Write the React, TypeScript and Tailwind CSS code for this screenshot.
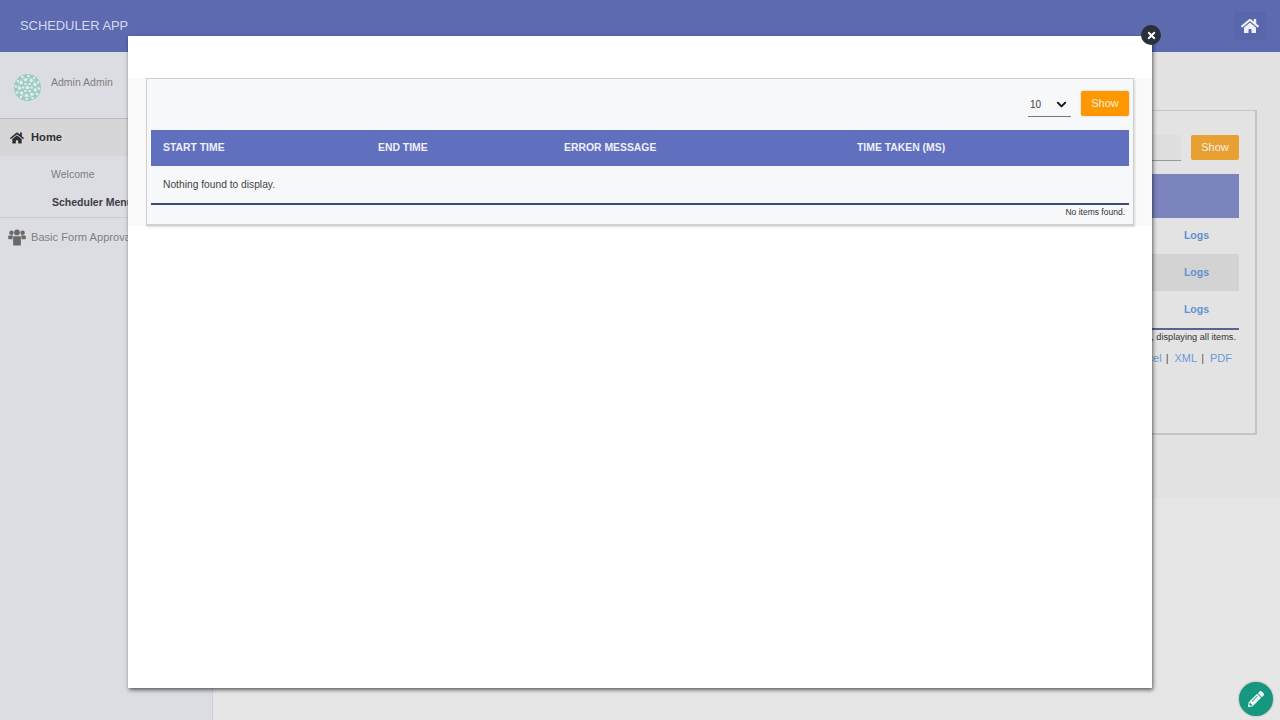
import { FaHome, FaPencilAlt, FaTimes } from "react-icons/fa";
import { ChevronDown } from "lucide-react";

function Avatar() {
  const dots: [number, number, number][] = [];
  for (let r = 0; r < 3; r++) {
    const rad = 4 + r * 3.6;
    const n = 6 + r * 3;
    for (let i = 0; i < n; i++) {
      const a = (i / n) * Math.PI * 2 + r * 0.3;
      dots.push([13 + rad * Math.cos(a), 13 + rad * Math.sin(a), r === 1 ? 1.6 : 1.2]);
    }
  }
  return (
    <svg width="27" height="27" viewBox="0 0 26 26" className="mt-[4px] shrink-0">
      <circle cx="13" cy="13" r="13" fill="#9ccbc2" />
      <circle cx="13" cy="13" r="9" fill="none" stroke="#b9dbd5" strokeWidth="1" />
      {dots.map(([x, y, s], i) => (
        <circle key={i} cx={x} cy={y} r={s} fill="#e2efec" />
      ))}
      <circle cx="13" cy="13" r="1.8" fill="#e2efec" />
    </svg>
  );
}

function GroupIcon() {
  return (
    <svg width="18" height="17" viewBox="0 0 18 17" className="shrink-0" fill="#69696c">
      <circle cx="3.4" cy="3.8" r="2.2" />
      <circle cx="14.6" cy="3.8" r="2.2" />
      <circle cx="9" cy="3.4" r="2.9" />
      <path d="M0.2 7.2 Q0.4 6.4 1.4 6.6 L5.4 6.6 Q4.4 8 4.4 10.2 L1 10.2 Q0.2 10.2 0.2 9.4 Z" />
      <path d="M17.8 7.2 Q17.6 6.4 16.6 6.6 L12.6 6.6 Q13.6 8 13.6 10.2 L17 10.2 Q17.8 10.2 17.8 9.4 Z" />
      <path d="M6.2 7.2 L11.8 7.2 Q12.9 7.2 12.9 8.4 L12.9 15.4 Q12.9 16.6 11.6 16.6 L6.4 16.6 Q5.1 16.6 5.1 15.4 L5.1 8.4 Q5.1 7.2 6.2 7.2 Z" />
    </svg>
  );
}

const bgRows = ["bg-transparent", "bg-[#d3d3d3]", "bg-transparent"];

function BackgroundCard() {
  return (
    <div className="mt-[58px] ml-[18px] mr-[23px] h-[325px] border border-[#c4c4c4] border-r-2 border-b-2 bg-[#e3e3e3] pl-[17px] pr-[16px] pt-[24px]">
      <div className="flex justify-end gap-[10px]">
        <div className="h-[26px] w-[160px] border-b border-[#9a9a9a] bg-[#dedede]" />
        <button className="h-[25px] w-[48px] rounded-[2px] bg-[#e8a033] text-[11px] text-[#f5efe2]">
          Show
        </button>
      </div>
      <div className="mt-[13px] h-[44px] bg-[#7b84bd]" />
      {bgRows.map((c, i) => (
        <div key={i} className={`flex items-center justify-end pr-[30px] ${i === 0 ? "h-[36px]" : "h-[37px]"} ${c}`}>
          <span className="text-[10.5px] font-bold text-[#5f92cf]">Logs</span>
        </div>
      ))}
      <div className="border-t-2 border-[#5a628f] pt-[1px] pr-[3px] text-right text-[9.2px] leading-[12px] text-[#333]">
        One item found, displaying all items.
      </div>
      <div className="mt-[8px] flex justify-end gap-[4px] pr-[7px] text-[11px] leading-[14px] text-[#6a9bd6]">
        <span>Excel</span>
        <span className="text-[#555]">|</span>
        <span className="ml-[2px]">XML</span>
        <span className="text-[#555]">|</span>
        <span className="ml-[2px]">PDF</span>
      </div>
    </div>
  );
}

function Sidebar() {
  return (
    <aside className="w-[213px] shrink-0 border-r border-[#cfd0d6] bg-[#dcdde2]">
      <div className="flex h-[67px] items-center gap-[10px] border-b border-[#b9babf] pl-[14px]">
        <Avatar />
        <span className="-mt-[5px] text-[10.5px] text-[#7d7d80]">Admin Admin</span>
      </div>
      <div className="flex h-[37px] items-center gap-[7px] bg-[#d6d6d9] pl-[10px] text-[11.2px] font-bold text-[#2f2f31]">
        <FaHome className="h-[14px] w-[14px]" />
        <span>Home</span>
      </div>
      <div className="h-[62px] border-b border-[#cbccd1] pl-[51px] pt-[11px] text-[10.5px] leading-[14px]">
        <div className="text-[#7d7d80]">Welcome</div>
        <div className="mt-[14px] ml-[1px] font-bold whitespace-nowrap text-[#3c3c3e]">Scheduler Menu</div>
      </div>
      <div className="flex h-[38px] items-center gap-[5px] pl-[8px] text-[11.1px] whitespace-nowrap text-[#808083]">
        <GroupIcon />
        <span>Basic Form Approval</span>
      </div>
    </aside>
  );
}

function Modal() {
  const cols = ["START TIME", "END TIME", "ERROR MESSAGE", "TIME TAKEN (MS)"];
  return (
    <div className="absolute left-[128px] top-[36px] h-[652px] w-[1024px] bg-white pt-[42px] shadow-[1px_2px_4px_rgba(0,0,0,0.6)]">
      <div className="h-[148px] bg-[#fafafa] px-[18px]">
        <div className="h-[148px] border border-[#cfcfcf] border-b-2 bg-[#f7f8f9] px-[4px] pt-[12px] shadow-[1px_1px_2px_rgba(0,0,0,0.15)]">
          <div className="flex h-[25px] items-start justify-end gap-[10px]">
            <div className="mt-[2px] flex h-[24px] w-[43px] items-center justify-between border-b border-[#777] px-[2px] text-[10px] text-[#444]">
              <span>10</span>
              <ChevronDown className="h-[15px] w-[15px] text-[#111]" strokeWidth={3} />
            </div>
            <button className="h-[25px] w-[48px] rounded-[2px] bg-[#ff9800] text-[11px] text-[#fdf2dc] shadow-[0_0_2px_rgba(0,0,0,0.25)]">
              Show
            </button>
          </div>
          <div className="mt-[14px] grid h-[36px] grid-cols-[215px_186px_293px_1fr] items-center bg-[#616fbf] text-[10.4px] font-bold text-[#eef0fa]">
            {cols.map((c) => (
              <div key={c} className="pl-[12px]">{c}</div>
            ))}
          </div>
          <div className="flex h-[37px] items-center pl-[12px] text-[10.25px] text-[#444]">Nothing found to display.</div>
          <div className="border-t-2 border-[#3f4a7c] pr-[4px] pt-[2px] text-right text-[8.5px] leading-[11px] text-[#333]">
            No items found.
          </div>
        </div>
      </div>
    </div>
  );
}

export default function App() {
  return (
    <div className="relative flex h-[720px] w-[1280px] flex-col overflow-hidden bg-[#e6e6e6] font-['Liberation_Sans',Arial,sans-serif]">
      <header className="flex h-[52px] shrink-0 items-center justify-between bg-[#5c6ab0] pl-[20px] pr-[14px] shadow-[0_1px_3px_rgba(0,0,0,0.3)]">
        <span className="text-[12.9px] text-[#d6daf0]">SCHEDULER APP</span>
        <div className="flex h-[28px] w-[32px] items-center justify-center rounded-[2px] bg-[#5966ab]">
          <FaHome className="h-[18px] w-[18px] text-[#eef0f8]" />
        </div>
      </header>
      <div className="flex min-h-0 flex-1">
        <Sidebar />
        <main className="flex-1">
          <div className="h-[446px] overflow-hidden bg-[#e2e2e2]">
            <BackgroundCard />
          </div>
        </main>
      </div>
      <Modal />
      <div className="absolute left-[1141px] top-[25px] flex h-[20px] w-[20px] items-center justify-center rounded-full bg-[#2b2f3a] text-white">
        <FaTimes className="h-[11px] w-[11px]" />
      </div>
      <div className="absolute left-[1239px] top-[682px] flex h-[34px] w-[34px] items-center justify-center rounded-full bg-[#16977f] text-[#eef7f5] shadow-[0_0_2px_rgba(0,0,0,0.4)]">
        <FaPencilAlt className="h-[16px] w-[16px]" />
      </div>
    </div>
  );
}
